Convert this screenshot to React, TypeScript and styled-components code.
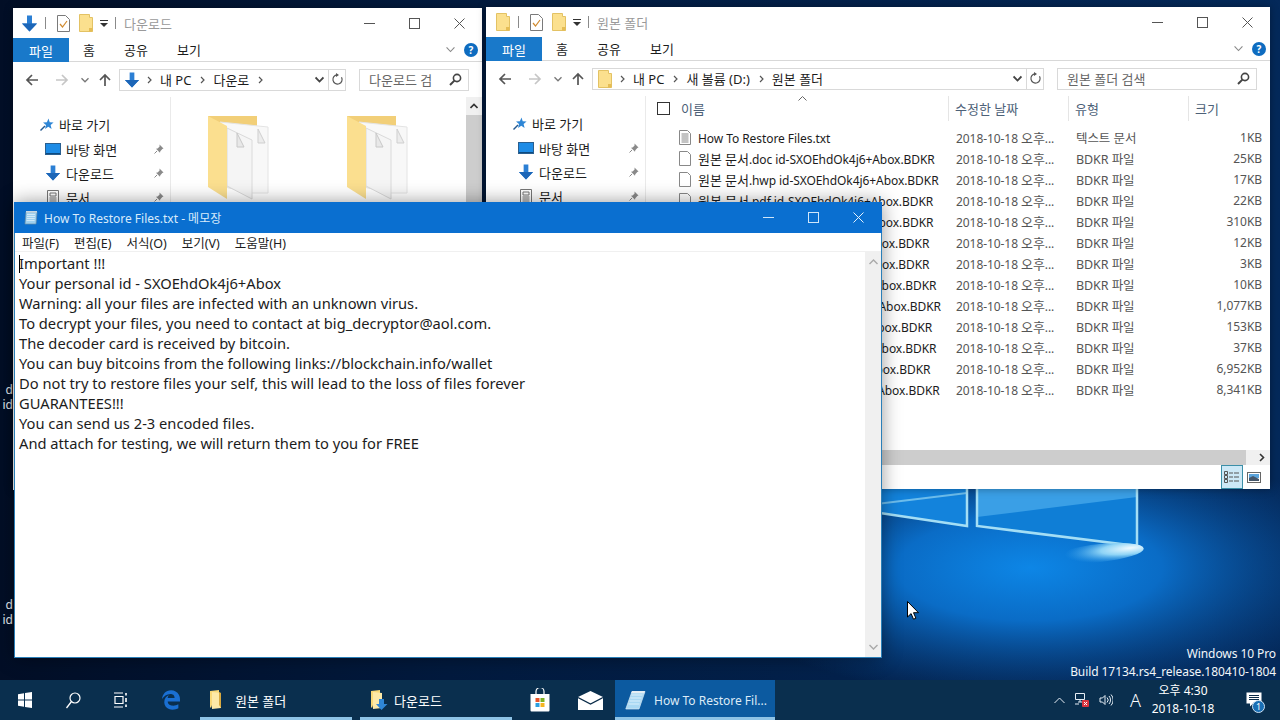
import { ReactNode } from 'react';
import styled, { createGlobalStyle } from 'styled-components';
import { FaEdgeLegacy } from 'react-icons/fa6';

const FONT = '"Noto Sans", "Noto Sans CJK KR", sans-serif';

const GlobalStyle = createGlobalStyle`
  html, body {
    margin: 0;
    padding: 0;
    width: 1280px;
    height: 720px;
    overflow: hidden;
    background: #03142e;
    font-family: ${FONT};
  }
  * { box-sizing: border-box; }
`;

const ID = ' id-SXOEhdOk4j6+Abox.BDKR';

const files = [
  { ko: '', name: 'How To Restore Files.txt', size: '1KB', kind: '텍스트 문서', lined: true },
  { ko: '원본 문서', name: '.doc' + ID, size: '25KB' },
  { ko: '원본 문서', name: '.hwp' + ID, size: '17KB' },
  { ko: '원본 문서', name: '.pdf' + ID, size: '22KB' },
  { ko: '원본 문서', name: '.ppt' + ID, size: '310KB' },
  { ko: '원본 문서', name: '.txt' + ID, size: '12KB' },
  { ko: '원본 문서', name: '.xls' + ID, size: '3KB' },
  { ko: '원본 문서', name: '.png' + ID, size: '10KB' },
  { ko: '원본 문서', name: '.docx' + ID, size: '1,077KB' },
  { ko: '원본 문서', name: '.jpg' + ID, size: '153KB' },
  { ko: '원본 문서', name: '.png' + ID, size: '37KB' },
  { ko: '원본 문서', name: '.zip' + ID, size: '6,952KB' },
  { ko: '원본 문서', name: '.pptx' + ID, size: '8,341KB' },
];

const noteLines = [
  'Important !!!',
  'Your personal id - SXOEhdOk4j6+Abox',
  'Warning: all your files are infected with an unknown virus.',
  'To decrypt your files, you need to contact at big_decryptor@aol.com.',
  'The decoder card is received by bitcoin.',
  'You can buy bitcoins from the following links://blockchain.info/wallet',
  'Do not try to restore files your self, this will lead to the loss of files forever',
  'GUARANTEES!!!',
  'You can send us 2-3 encoded files.',
  'And attach for testing, we will return them to you for FREE',
];

/* ---------- icons ---------- */

const DownArrow = ({ size = 17 }: { size?: number }) => (
  <svg width={size} height={size} viewBox="0 0 17 17">
    <path d="M6 0.5h5v8h5L8.5 16.5 1 8.5h5z" fill="#2b7fd4" />
    <path d="M8.5 16.5L1 8.5h15z" fill="#1c66b8" />
  </svg>
);

const SmallFolder = ({ size = 15 }: { size?: number }) => (
  <svg width={size - 1} height={size + 3} viewBox="0 0 14 18">
    <path d="M0.5 0.5h10v3h3v14h-13z" fill="#fbe08e" stroke="#e3c264" />
    <path d="M10 14h3.5v3.5H10z" fill="#e5bd55" />
  </svg>
);

const CheckDoc = () => (
  <svg width="13" height="17" viewBox="0 0 13 17">
    <path d="M0.5 0.5h8l4 4v12h-12z" fill="#fff" stroke="#7a7a7a" />
    <path d="M3 9l2.5 3L10 6" fill="none" stroke="#d08a2e" strokeWidth="1.2" />
  </svg>
);

const SmallCaret = () => (
  <svg width="8" height="9" viewBox="0 0 8 9">
    <path d="M0 1h8v1H0z" fill="#333" />
    <path d="M0 4h8L4 8z" fill="#333" />
  </svg>
);

const Minimize = ({ light }: { light?: boolean }) => (
  <svg width="11" height="11" viewBox="0 0 11 11">
    <path d="M0 5.5h11" stroke={light ? '#cfe6fa' : '#555'} />
  </svg>
);
const Maximize = ({ light }: { light?: boolean }) => (
  <svg width="11" height="11" viewBox="0 0 11 11">
    <rect x="0.5" y="0.5" width="10" height="10" fill="none" stroke={light ? '#cfe6fa' : '#555'} />
  </svg>
);
const CloseIcon = ({ light }: { light?: boolean }) => (
  <svg width="11" height="11" viewBox="0 0 11 11">
    <path d="M0.5 0.5l10 10M10.5 0.5l-10 10" stroke={light ? '#e4f1fc' : '#555'} />
  </svg>
);

const NavArrow = ({ dir, color }: { dir: 'left' | 'right' | 'up'; color: string }) => {
  const d = {
    left: 'M13 7H2M7 2L2 7l5 5',
    right: 'M1 7h11M7 2l5 5-5 5',
    up: 'M7 13V2M2 7l5-5 5 5',
  }[dir];
  return (
    <svg width="14" height="14" viewBox="0 0 14 14">
      <path d={d} fill="none" stroke={color} strokeWidth="1.7" />
    </svg>
  );
};

const Chevron = ({ width = 8, color = '#666', sw = 1.3 }: { width?: number; color?: string; sw?: number }) => (
  <svg width={width} height={width} viewBox="0 0 8 8">
    <path d="M0.5 2.2L4 5.8l3.5-3.6" fill="none" stroke={color} strokeWidth={sw} />
  </svg>
);

const CrumbArrow = () => (
  <svg width="5" height="8" viewBox="0 0 5 8">
    <path d="M1 1l3 3-3 3" fill="none" stroke="#555" strokeWidth="1.2" />
  </svg>
);

const Refresh = () => (
  <svg width="13" height="13" viewBox="0 0 13 13">
    <path d="M10.5 4.2A4.6 4.6 0 1 1 6.2 1.9" fill="none" stroke="#555" strokeWidth="1.2" />
    <path d="M5 0v4l3-2z" fill="#555" />
  </svg>
);

const SearchGlass = () => (
  <svg width="13" height="13" viewBox="0 0 13 13">
    <circle cx="8" cy="5" r="3.6" fill="none" stroke="#444" strokeWidth="1.6" />
    <path d="M5.4 7.6L1 12" stroke="#444" strokeWidth="2" />
  </svg>
);

const QuickStar = () => (
  <svg width="14" height="13" viewBox="0 0 14 13">
    <path d="M8.5 0.5l1.2 3.8 3.9 0.2-3 2.5 1 3.9-3.3-2.2-3.3 2.2 1-3.9-3-2.5 3.9-0.2z" fill="#2e86d6" />
    <path d="M0.5 12.5L5 8" stroke="#23598f" strokeWidth="1.4" />
  </svg>
);

const DesktopIcon = () => (
  <svg width="16" height="12" viewBox="0 0 16 12">
    <rect x="0.5" y="0.5" width="15" height="11" fill="#1e8ce6" stroke="#2a5f8f" />
    <path d="M1 10h14v1H1z" fill="#0c4a80" />
  </svg>
);

const DocsIcon = () => (
  <svg width="12" height="14" viewBox="0 0 12 14">
    <path d="M0.5 0.5h11v13h-11z" fill="#fff" stroke="#777" />
    <path d="M3 3h6v3H3zM2.5 8h7M2.5 10h7M2.5 12h7" fill="none" stroke="#777" />
  </svg>
);

const Pin = () => (
  <svg width="10" height="10" viewBox="0 0 10 10">
    <path d="M5.5 0.5l4 4-1.2 0.5-2 2.2-0.3 1.6-4-4 1.6-0.3 2-2z" fill="#8a8a8a" />
    <path d="M3 7L0.5 9.5" stroke="#8a8a8a" />
  </svg>
);

const LargeFolder = () => (
  <svg width="70" height="90" viewBox="0 0 70 90">
    <path d="M0 0h49v11H0z" fill="#f2cf78" />
    <path d="M12 6l48 5v66H44L12 70z" fill="#f8f8f8" stroke="#e4e4e4" />
    <path d="M50 13v14h7z" fill="#ececec" stroke="#cfcfcf" />
    <path d="M19 12l25 12v59L19 70z" fill="#f5f5f5" stroke="#dadada" />
    <path d="M29 17v14h7z" fill="#e8e8e8" stroke="#c8c8c8" />
    <path d="M0 0l19 10v73L0 71z" fill="#fbdf8f" />
  </svg>
);

const FileIcon = ({ lined }: { lined?: boolean }) => (
  <svg width="12" height="15" viewBox="0 0 12 15">
    <path d="M0.5 0.5h8l3 3v11h-11z" fill="#fff" stroke="#888" />
    {lined && <path d="M2.5 4h7M2.5 6h7M2.5 8h7M2.5 10h7M2.5 12h7" stroke="#888" />}
  </svg>
);

const DetailsView = () => (
  <svg width="16" height="12" viewBox="0 0 16 12">
    <path d="M0.5 0.5h3v3h-3zM0.5 4.5h3v3h-3zM0.5 8.5h3v3h-3z" fill="none" stroke="#555" />
    <path d="M5 2h4M10 2h5M5 6h4M10 6h5M5 10h4M10 10h5" stroke="#555" />
  </svg>
);

const PreviewView = () => (
  <svg width="14" height="11" viewBox="0 0 14 11">
    <rect x="0.5" y="0.5" width="13" height="10" fill="#fff" stroke="#666" />
    <path d="M2 2h10v4H2z" fill="#5ba4dc" />
    <path d="M2 6l4-2 6 3v2H2z" fill="#44566a" />
  </svg>
);

const NotepadIcon = () => (
  <svg width="14" height="15" viewBox="0 0 14 15">
    <path d="M2 2h11l-1 12H1z" fill="#9fd0ee" stroke="#6b8fa8" strokeWidth="0.7" />
    <path d="M3 4.5h8M3 6.5h8M2.8 8.5h8M2.6 10.5h8" stroke="#e6f4fb" strokeWidth="0.7" />
    <path d="M2 1h11v1.6H2z" fill="#c8d8e2" />
  </svg>
);

const NotepadBigIcon = () => (
  <svg width="21" height="21" viewBox="0 0 21 21" style={{ flex: 'none' }}>
    <path d="M7 1.5h13L14 19H0.8z" fill="#a9d8f3" stroke="#dcebf5" strokeWidth="0.7" />
    <path d="M6.5 5h11M5.5 8h11M4.5 11h11M3.5 14h11" stroke="#e9f6fc" strokeWidth="0.8" />
    <path d="M7 1h13l-0.8 2.2H6.2z" fill="#e6eef4" />
  </svg>
);

const WindowsLogo = () => (
  <svg width="14" height="16" viewBox="0 0 14 16">
    <path d="M0 2.2l6-.9v6.2H0zM7 1.1L14 0v7.5H7zM0 8.5h6v6.2l-6-.9zM7 8.5h7V16l-7-1.1z" fill="#fff" />
  </svg>
);

const TaskSearch = () => (
  <svg width="15" height="17" viewBox="0 0 15 17">
    <circle cx="9" cy="6" r="5" fill="none" stroke="#fff" strokeWidth="1.2" />
    <path d="M5.5 9.5L0.5 16" stroke="#fff" strokeWidth="1.3" />
  </svg>
);

const TaskView = () => (
  <svg width="16" height="16" viewBox="0 0 16 16">
    <path d="M1 1h9M1 15h9M2 4.5h8v7H2z" fill="none" stroke="#fff" strokeWidth="1.2" />
    <path d="M13 1v2.5M13 6v4M13 12.5V15" stroke="#fff" strokeWidth="1.6" />
  </svg>
);

const TaskFolder = ({ arrow }: { arrow?: boolean }) => (
  <svg width="18" height="22" viewBox="0 0 18 22" style={{ flex: 'none' }}>
    <path d="M1 2l9-1v15H3l-1 3-1-1z" fill="#f9d979" />
    <path d="M3 3l9 1v15l-9 1z" fill="#fde9a8" />
    {arrow ? (
      <path d="M9 10h5v5h3.5L11.5 21 6 15h3z" fill="#2f86d6" />
    ) : (
      <path d="M10 16l2 3V4l-2-1z" fill="#d8a93f" />
    )}
  </svg>
);

const StoreIcon = () => (
  <svg width="20" height="24" viewBox="0 0 20 24">
    <path d="M6 6V3.5a4 4 0 0 1 8 0V6" fill="none" stroke="#fff" strokeWidth="1.2" />
    <path d="M0.5 6h19v16.5a1 1 0 0 1-1 1h-17a1 1 0 0 1-1-1z" fill="#fff" />
    <path d="M5.5 10H9.5v4H5.5z" fill="#e8542a" />
    <path d="M10.5 10h4v4h-4z" fill="#7db122" />
    <path d="M5.5 15h4v4h-4z" fill="#2a9fe0" />
    <path d="M10.5 15h4v4h-4z" fill="#f4b522" />
  </svg>
);

const MailIcon = () => (
  <svg width="25" height="19" viewBox="0 0 25 19">
    <path d="M0 6L12.5 0 25 6v13H0z" fill="#fff" />
    <path d="M0 6.5l12.5 6.5L25 6.5" fill="none" stroke="#0a2b48" strokeWidth="1.4" />
    <path d="M0 7.5L11 13 0 19z" fill="#0a2b48" opacity="0" />
    <path d="M25 7.5L10 19h15z" fill="#fff" />
  </svg>
);

const NetworkIcon = () => (
  <svg width="16" height="16" viewBox="0 0 16 16">
    <path d="M1.5 1.5h9v6h-9zM4 10h5M6 7.5V10M1 12h4" fill="none" stroke="#e6eef5" />
    <rect x="8" y="8" width="7" height="7" rx="1" fill="#d8343f" />
    <path d="M10 10l3 3M13 10l-3 3" stroke="#fff" />
  </svg>
);

const SpeakerIcon = () => (
  <svg width="14" height="14" viewBox="0 0 14 14">
    <path d="M1 5h2.5L6 2.5v9L3.5 9H1z" fill="none" stroke="#e6eef5" />
    <path d="M8 4.5a3.5 3.5 0 0 1 0 5M10 3a6 6 0 0 1 0 8M12 1.5a8 8 0 0 1 0 11" fill="none" stroke="#e6eef5" />
  </svg>
);

const NotifyIcon = () => (
  <svg width="16" height="17" viewBox="0 0 16 17">
    <path d="M0.5 0.5h15v11H7l-3 3v-3H0.5z" fill="#fff" />
    <path d="M3 3.5h10M3 5.5h10M3 7.5h10" stroke="#0a2b48" />
  </svg>
);

const Wallpaper = () => (
  <WallpaperArt viewBox="0 0 1280 720" preserveAspectRatio="none">
    <defs>
      <linearGradient id="base" x1="0" y1="0" x2="1" y2="0">
        <stop offset="0" stopColor="#020e26" />
        <stop offset="0.35" stopColor="#021a3e" />
        <stop offset="1" stopColor="#04295a" />
      </linearGradient>
      <radialGradient id="glow" gradientUnits="userSpaceOnUse" cx="1030" cy="570" r="330" gradientTransform="translate(0 340) scale(1 0.4)">
        <stop offset="0" stopColor="#0d86e6" />
        <stop offset="0.4" stopColor="#0a6cc6" />
        <stop offset="1" stopColor="#0a4f9c" stopOpacity="0" />
      </radialGradient>
      <radialGradient id="flare" cx="0.85" cy="0.4" r="0.75">
        <stop offset="0" stopColor="#f0fbff" />
        <stop offset="0.45" stopColor="#8fd4f6" />
        <stop offset="1" stopColor="#3aa2ea" stopOpacity="0" />
      </radialGradient>
    </defs>
    <rect width="1280" height="720" fill="url(#base)" />
    <rect width="1280" height="720" fill="url(#glow)" />
    <path d="M860 400L967 400V526L860 510z" fill="#1383dc" />
    <path d="M977 400H1137V546L977 526z" fill="#0f7ed6" />
    <path d="M977 480H1137V497L977 517z" fill="#3a9fe6" />
    <path d="M860 506L967 493" stroke="#6dbdec" strokeWidth="2" fill="none" />
    <path d="M860 510L967 526V480" stroke="#a4def5" strokeWidth="2.5" fill="none" />
    <path d="M977 480V526L1137 546V480" stroke="#a4def5" strokeWidth="2.5" fill="none" />
    <ellipse cx="1100" cy="553" rx="44" ry="9" fill="url(#flare)" transform="rotate(-6 1100 553)" />
  </WallpaperArt>
);

/* ---------- explorer window ---------- */

type ExplorerProps = {
  title: string;
  titleIcon: ReactNode;
  crumbs: string[];
  search: string;
  addressIcon: ReactNode;
  x: number;
  y: number;
  w: number;
  h: number;
  navWidth: number;
  children: ReactNode;
};

const Explorer = ({ title, titleIcon, crumbs, search, addressIcon, x, y, w, h, navWidth, children }: ExplorerProps) => (
  <ExplorerFrame $x={x} $y={y} $w={w} $h={h}>
    <TitleBar>
      <QuickSlot $w={17}>{titleIcon}</QuickSlot>
      <QuickSep />
      <QuickSlot $w={13}><CheckDoc /></QuickSlot>
      <QuickSlot $w={14} $gap={9}><SmallFolder /></QuickSlot>
      <QuickSlot $w={8} $gap={7}><SmallCaret /></QuickSlot>
      <QuickSep />
      <TitleText>{title}</TitleText>
      <Controls>
        <ControlButton><Minimize /></ControlButton>
        <ControlButton><Maximize /></ControlButton>
        <ControlButton><CloseIcon /></ControlButton>
      </Controls>
    </TitleBar>
    <RibbonTabs>
      <FileTab>파일</FileTab>
      <RibbonTab $w={40}>홈</RibbonTab>
      <RibbonTab $w={54}>공유</RibbonTab>
      <RibbonTab $w={52}>보기</RibbonTab>
      <RibbonRight>
        <Chevron width={9} color="#888" sw={1} />
        <HelpBadge>?</HelpBadge>
      </RibbonRight>
    </RibbonTabs>
    <AddressRow>
      <NavButton $w={30}><NavArrow dir="left" color="#555" /></NavButton>
      <NavButton $w={30}><NavArrow dir="right" color="#c6c6c6" /></NavButton>
      <NavButton $w={16}><Chevron color="#777" /></NavButton>
      <NavButton $w={24}><NavArrow dir="up" color="#555" /></NavButton>
      <AddressBox>
        <AddressIcon>{addressIcon}</AddressIcon>
        {crumbs.map((crumb) => (
          <Crumb key={crumb}>
            <CrumbArrow />
            <span>{crumb}</span>
          </Crumb>
        ))}
        <AddressEnd>
          <Chevron width={9} color="#444" sw={1.6} />
          <RefreshCell><Refresh /></RefreshCell>
        </AddressEnd>
      </AddressBox>
      <SearchBox $w={search.length > 6 ? 200 : 110}>
        <span>{search}</span>
        <SearchGlass />
      </SearchBox>
    </AddressRow>
    <ExplorerBody>
      <NavPane $w={navWidth}>
        <NavHead>
          <QuickStar />
          <span>바로 가기</span>
        </NavHead>
        <NavItem>
          <NavIcon><DesktopIcon /></NavIcon>
          <span>바탕 화면</span>
          <PinSlot><Pin /></PinSlot>
        </NavItem>
        <NavItem>
          <NavIcon><DownArrow size={16} /></NavIcon>
          <span>다운로드</span>
          <PinSlot><Pin /></PinSlot>
        </NavItem>
        <NavItem>
          <NavIcon><DocsIcon /></NavIcon>
          <span>문서</span>
          <PinSlot><Pin /></PinSlot>
        </NavItem>
      </NavPane>
      {children}
    </ExplorerBody>
  </ExplorerFrame>
);

export default function App() {
  return (
    <Screen>
      <GlobalStyle />
      <Desktop>
        <Wallpaper />
        <DesktopLabel $y={382}>d<br />id</DesktopLabel>
        <DesktopLabel $y={597}>d<br />id</DesktopLabel>
        <Watermark>
          <div>Windows 10 Pro</div>
          <div>Build 17134.rs4_release.180410-1804</div>
        </Watermark>
        <Explorer
          title="다운로드"
          titleIcon={<DownArrow />}
          addressIcon={<DownArrow size={16} />}
          crumbs={['내 PC', '다운로', '']}
          search="다운로드 검"
          x={13}
          y={8}
          w={469}
          h={482}
          navWidth={158}
        >
          <FolderGrid>
            <LargeFolder />
            <LargeFolder />
          </FolderGrid>
          <VScroll>
            <VScrollButton>
              <svg width="8" height="6" viewBox="0 0 8 6">
                <path d="M0.5 5L4 1.5 7.5 5" fill="none" stroke="#333" strokeWidth="1.6" />
              </svg>
            </VScrollButton>
            <VScrollThumb />
          </VScroll>
        </Explorer>
        <Explorer
          title="원본 폴더"
          titleIcon={<SmallFolder />}
          addressIcon={<SmallFolder />}
          crumbs={['내 PC', '새 볼륨 (D:)', '원본 폴더']}
          search="원본 폴더 검색"
          x={486}
          y={7}
          w={784}
          h={482}
          navWidth={160}
        >
          <ListPane>
            <SortCaret>
              <svg width="9" height="5" viewBox="0 0 9 5">
                <path d="M0.5 4.5L4.5 0.5l4 4" fill="none" stroke="#666" />
              </svg>
            </SortCaret>
            <ListHead>
              <NameHead>
                <CheckBox />
                <span>이름</span>
              </NameHead>
              <ColHead>수정한 날짜</ColHead>
              <ColHead>유형</ColHead>
              <ColHead>크기</ColHead>
            </ListHead>
            <ListRows>
              {files.map((file, index) => (
                <FileRow key={index}>
                  <FileName>
                    <FileIcon lined={file.lined} />
                    <span>
                      <Hangul>{file.ko}</Hangul>
                      {file.name}
                    </span>
                  </FileName>
                  <FileCell>
                    2018-10-18 <Hangul>오후</Hangul>...
                  </FileCell>
                  <KindCell>{file.kind ?? 'BDKR 파일'}</KindCell>
                  <FileSize>{file.size}</FileSize>
                </FileRow>
              ))}
            </ListRows>
            <HScroll>
              <HScrollThumb />
              <HScrollEnd>
                <svg width="6" height="9" viewBox="0 0 6 9">
                  <path d="M1 1l3.5 3.5L1 8" fill="none" stroke="#333" strokeWidth="1.6" />
                </svg>
              </HScrollEnd>
            </HScroll>
            <StatusBar>
              <ViewToggle $active><DetailsView /></ViewToggle>
              <ViewToggle><PreviewView /></ViewToggle>
            </StatusBar>
          </ListPane>
        </Explorer>
        <Notepad>
          <NoteTitle>
            <NotepadIcon />
            <NoteTitleText>How To Restore Files.txt - 메모장</NoteTitleText>
            <Controls>
              <ControlButton><Minimize light /></ControlButton>
              <ControlButton><Maximize light /></ControlButton>
              <ControlButton><CloseIcon light /></ControlButton>
            </Controls>
          </NoteTitle>
          <NoteMenu>
            {['파일(F)', '편집(E)', '서식(O)', '보기(V)', '도움말(H)'].map((item) => (
              <span key={item}>{item}</span>
            ))}
          </NoteMenu>
          <NoteBody>
            <NoteText>
              <Caret />
              {noteLines.map((line) => (
                <div key={line}>{line}</div>
              ))}
            </NoteText>
            <NoteScroll>
              <svg width="9" height="6" viewBox="0 0 9 6">
                <path d="M0.5 5L4.5 1l4 4" fill="none" stroke="#aaa" strokeWidth="1.4" />
              </svg>
              <svg width="9" height="6" viewBox="0 0 9 6">
                <path d="M0.5 1l4 4 4-4" fill="none" stroke="#aaa" strokeWidth="1.4" />
              </svg>
            </NoteScroll>
          </NoteBody>
        </Notepad>
        <Pointer viewBox="0 0 12 19" width="12" height="19">
          <path d="M0.5 0.5v15.5l3.6-3.4 2.4 5.6 2.4-1-2.4-5.5h5z" fill="#fff" stroke="#000" />
        </Pointer>
      </Desktop>
      <Taskbar>
        <TrayIconSlot $w={50}><WindowsLogo /></TrayIconSlot>
        <TrayIconSlot $w={46}><TaskSearch /></TrayIconSlot>
        <TrayIconSlot $w={50}><TaskView /></TrayIconSlot>
        <TrayIconSlot $w={50}>
          <FaEdgeLegacy size={20} color="#1a6fd2" />
        </TrayIconSlot>
        <TaskButton $ml={4} $pad={9} $gap={8}>
          <TaskFolder />
          <span>원본 폴더</span>
        </TaskButton>
        <TaskButton $ml={8} $pad={10} $gap={6}>
          <TaskFolder arrow />
          <span>다운로드</span>
        </TaskButton>
        <TrayIconSlot $w={52} $ml={2}><StoreIcon /></TrayIconSlot>
        <TrayIconSlot $w={49}><MailIcon /></TrayIconSlot>
        <ActiveTask>
          <NotepadBigIcon />
          <span>How To Restore Fil...</span>
        </ActiveTask>
        <Tray>
          <svg width="11" height="7" viewBox="0 0 11 7">
            <path d="M0.5 6L5.5 1l5 5" fill="none" stroke="#e6eef5" />
          </svg>
          <NetworkIcon />
          <SpeakerIcon />
          <ImeLetter>A</ImeLetter>
          <Clock>
            <div>오후 4:30</div>
            <div>2018-10-18</div>
          </Clock>
          <NotifyWrap>
            <NotifyIcon />
            <NotifyBadge>1</NotifyBadge>
          </NotifyWrap>
        </Tray>
      </Taskbar>
    </Screen>
  );
}

/* ---------- styles ---------- */

const Screen = styled.div`
  width: 1280px;
  height: 720px;
  display: flex;
  flex-direction: column;
  overflow: hidden;
`;

const Desktop = styled.div`
  position: relative;
  flex: 1;
  overflow: hidden;
`;

const WallpaperArt = styled.svg`
  position: absolute;
  inset: 0;
  width: 1280px;
  height: 720px;
`;

const DesktopLabel = styled.div<{ $y: number }>`
  position: absolute;
  left: 0;
  top: ${(p) => p.$y}px;
  width: 13px;
  text-align: right;
  color: #e8eef5;
  font-size: 12px;
  line-height: 15px;
`;

const Watermark = styled.div`
  position: absolute;
  right: 4px;
  top: 645px;
  text-align: right;
  color: #f2f6fa;
  font-size: 12px;
  line-height: 18px;
  letter-spacing: -0.08px;
`;

const ExplorerFrame = styled.div<{ $x: number; $y: number; $w: number; $h: number }>`
  position: absolute;
  left: ${(p) => p.$x}px;
  top: ${(p) => p.$y}px;
  width: ${(p) => p.$w}px;
  height: ${(p) => p.$h}px;
  background: #fff;
  display: flex;
  flex-direction: column;
  box-shadow: 0 0 8px rgba(0, 0, 0, 0.35);
  overflow: hidden;
  font-size: 13px;
  color: #1c1c1c;
`;

const Hangul = styled.span`
  font-size: 13px;
`;

const TitleBar = styled.div`
  height: 30px;
  display: flex;
  align-items: center;
  padding-left: 8px;
  flex: none;
`;

const QuickSlot = styled.div<{ $w: number; $gap?: number }>`
  width: ${(p) => p.$w}px;
  margin-left: ${(p) => p.$gap ?? 0}px;
  display: flex;
  justify-content: center;
  align-items: center;
`;

const QuickSep = styled.div`
  width: 1px;
  height: 12px;
  background: #8a8a8a;
  margin: 0 8px 0 7px;
  &:nth-child(2) { margin: 0 11px 0 7px; }
`;

const TitleText = styled.div`
  color: #9a9a9a;
`;

const Controls = styled.div`
  margin-left: auto;
  display: flex;
  align-self: stretch;
`;

const ControlButton = styled.div`
  width: 45px;
  display: flex;
  align-items: center;
  justify-content: center;
`;

const RibbonTabs = styled.div`
  height: 24px;
  display: flex;
  align-items: stretch;
  flex: none;
  border-bottom: 1px solid #d8d8d8;
  padding-right: 4px;
`;

const FileTab = styled.div`
  width: 56px;
  margin-bottom: -1px;
  background: #1979ca;
  color: #fff;
  display: flex;
  align-items: center;
  justify-content: center;
`;

const RibbonTab = styled.div<{ $w: number }>`
  width: ${(p) => p.$w}px;
  display: flex;
  align-items: center;
  justify-content: center;
`;

const RibbonRight = styled.div`
  margin-left: auto;
  display: flex;
  align-items: center;
  gap: 9px;
`;

const HelpBadge = styled.div`
  width: 14px;
  height: 14px;
  border-radius: 50%;
  background: #0e6cc0;
  color: #fff;
  font-size: 10px;
  font-weight: 700;
  line-height: 14px;
  text-align: center;
`;

const AddressRow = styled.div`
  height: 35px;
  flex: none;
  display: flex;
  align-items: center;
  padding: 0 13px 0 4px;
`;

const NavButton = styled.div<{ $w: number }>`
  width: ${(p) => p.$w}px;
  display: flex;
  justify-content: center;
  align-items: center;
  flex: none;
`;

const AddressBox = styled.div`
  flex: 1;
  height: 22px;
  margin-left: 2px;
  border: 1px solid #d9d9d9;
  display: flex;
  align-items: center;
  padding-left: 4px;
  min-width: 0;
`;

const AddressIcon = styled.div`
  width: 16px;
  display: flex;
  justify-content: center;
  flex: none;
  margin-right: 7px;
`;

const Crumb = styled.div`
  display: flex;
  align-items: center;
  gap: 8px;
  margin-right: 9px;
  white-space: nowrap;
`;

const AddressEnd = styled.div`
  margin-left: auto;
  display: flex;
  align-items: center;
  align-self: stretch;
  gap: 4px;
  padding-left: 4px;
`;

const RefreshCell = styled.div`
  width: 17px;
  align-self: stretch;
  border-left: 1px solid #d9d9d9;
  display: flex;
  align-items: center;
  justify-content: center;
`;

const SearchBox = styled.div<{ $w: number }>`
  width: ${(p) => p.$w}px;
  height: 22px;
  flex: none;
  margin-left: 13px;
  border: 1px solid #d9d9d9;
  display: flex;
  align-items: center;
  justify-content: space-between;
  padding: 0 6px 0 9px;
  color: #666;
`;

const ExplorerBody = styled.div`
  flex: 1;
  display: flex;
  min-height: 0;
`;

const NavPane = styled.div<{ $w: number }>`
  width: ${(p) => p.$w}px;
  flex: none;
  border-right: 1px solid #eaeaea;
  padding: 17px 0 0 27px;
  display: flex;
  flex-direction: column;
`;

const NavHead = styled.div`
  height: 23px;
  display: flex;
  align-items: center;
  gap: 5px;
  padding-bottom: 2px;
`;

const NavItem = styled.div`
  height: 24px;
  display: flex;
  align-items: center;
  padding-left: 5px;
`;

const NavIcon = styled.div`
  width: 16px;
  display: flex;
  justify-content: center;
  margin-right: 5px;
`;

const PinSlot = styled.div`
  margin-left: auto;
  margin-right: 6px;
  display: flex;
`;

const FolderGrid = styled.div`
  flex: 1;
  display: flex;
  gap: 69px;
  padding: 19px 0 0 37px;
  align-items: flex-start;
`;

const VScroll = styled.div`
  width: 16px;
  flex: none;
  background: #f0f0f0;
  display: flex;
  flex-direction: column;
`;

const VScrollButton = styled.div`
  height: 18px;
  display: flex;
  align-items: center;
  justify-content: center;
`;

const VScrollThumb = styled.div`
  height: 200px;
  background: #cdcdcd;
`;

const ListPane = styled.div`
  position: relative;
  flex: 1;
  display: flex;
  flex-direction: column;
  min-width: 0;
`;

const SortCaret = styled.div`
  position: absolute;
  left: 152px;
  top: 0;
  line-height: 0;
`;

const listColumns = '302px 120px 120px 74px';

const ListHead = styled.div`
  display: grid;
  grid-template-columns: ${listColumns};
  height: 25px;
  flex: none;
  color: #4d6178;
`;

const NameHead = styled.div`
  display: flex;
  align-items: center;
  gap: 11px;
  padding-left: 11px;
`;

const CheckBox = styled.div`
  width: 13px;
  height: 13px;
  border: 1px solid #333;
`;

const ColHead = styled.div`
  border-left: 1px solid #e5e5e5;
  padding-left: 6px;
  display: flex;
  align-items: center;
`;

const ListRows = styled.div`
  flex: 1;
  padding-top: 6px;
  font-size: 12px;
  letter-spacing: -0.07px;
`;

const FileRow = styled.div`
  display: grid;
  grid-template-columns: ${listColumns};
  height: 21px;
  align-items: center;
`;

const FileName = styled.div`
  display: flex;
  align-items: center;
  gap: 7px;
  padding-left: 33px;
  white-space: nowrap;
  color: #1c1c1c;
`;

const FileCell = styled.div`
  padding-left: 8px;
  color: #555;
  white-space: nowrap;
`;

const KindCell = styled(FileCell)`
  font-size: 12.5px;
`;

const FileSize = styled(FileCell)`
  text-align: right;
`;

const HScroll = styled.div`
  height: 15px;
  flex: none;
  display: flex;
  background: #f0f0f0;
`;

const HScrollThumb = styled.div`
  flex: 1;
  background: #cdcdcd;
`;

const HScrollEnd = styled.div`
  width: 24px;
  display: flex;
  align-items: center;
  justify-content: flex-end;
  padding-right: 5px;
`;

const StatusBar = styled.div`
  height: 24px;
  flex: none;
  display: flex;
  justify-content: flex-end;
  padding-right: 5px;
`;

const ViewToggle = styled.div<{ $active?: boolean }>`
  width: 22px;
  display: flex;
  align-items: center;
  justify-content: center;
  background: ${(p) => (p.$active ? '#cce8f6' : 'transparent')};
  border: 1px solid ${(p) => (p.$active ? '#3b8fa8' : 'transparent')};
`;

const Notepad = styled.div`
  position: absolute;
  left: 14px;
  top: 202px;
  width: 868px;
  height: 456px;
  background: #fff;
  border: 1px solid #2a7fb8;
  border-top: none;
  display: flex;
  flex-direction: column;
  box-shadow: 0 0 18px rgba(0, 0, 0, 0.4);
`;

const NoteTitle = styled.div`
  height: 31px;
  flex: none;
  background: #0a6fd0;
  margin: 0 -1px 0 -1px;
  display: flex;
  align-items: center;
  padding-left: 10px;
  & > div:last-child { margin-right: 1px; }
`;

const NoteTitleText = styled.div`
  margin-left: 6px;
  color: #d8ebfb;
  font-size: 12px;
`;

const NoteMenu = styled.div`
  height: 19px;
  flex: none;
  display: flex;
  align-items: center;
  gap: 15px;
  padding-left: 7px;
  font-size: 12.5px;
  color: #1c1c1c;
  border-bottom: 1px solid #f0f0f0;
`;

const NoteBody = styled.div`
  flex: 1;
  display: flex;
  min-height: 0;
`;

const NoteText = styled.div`
  position: relative;
  flex: 1;
  padding: 1px 0 0 4px;
  font-size: 14.7px;
  line-height: 20px;
  color: #1c1c1c;
  white-space: pre;
`;

const Caret = styled.div`
  position: absolute;
  left: 4px;
  top: 3px;
  width: 1px;
  height: 18px;
  background: #000;
`;

const NoteScroll = styled.div`
  width: 16px;
  flex: none;
  background: #f0f0f0;
  display: flex;
  flex-direction: column;
  justify-content: space-between;
  align-items: center;
  padding: 7px 0;
`;

const Pointer = styled.svg`
  position: absolute;
  left: 907px;
  top: 601px;
`;

const Taskbar = styled.div`
  height: 40px;
  flex: none;
  display: flex;
  align-items: stretch;
  background: #0a2f4e;
  color: #fff;
  font-size: 13px;
  position: relative;
`;

const TrayIconSlot = styled.div<{ $w: number; $ml?: number }>`
  width: ${(p) => p.$w}px;
  margin-left: ${(p) => p.$ml ?? 0}px;
  display: flex;
  align-items: center;
  justify-content: center;
  flex: none;
`;

const TaskButton = styled.div<{ $ml: number; $pad: number; $gap: number }>`
  width: 152px;
  margin-left: ${(p) => p.$ml}px;
  flex: none;
  display: flex;
  align-items: center;
  gap: ${(p) => p.$gap}px;
  padding-left: ${(p) => p.$pad}px;
  border-bottom: 3px solid #8ec3e6;
  padding-top: 3px;
`;

const ActiveTask = styled.div`
  width: 160px;
  flex: none;
  display: flex;
  align-items: center;
  gap: 8px;
  padding: 3px 0 0 10px;
  background: #0c5aa0;
  border-bottom: 3px solid #8ec3e6;
  color: #dcebf7;
  font-size: 12px;
  white-space: nowrap;
`;

const Tray = styled.div`
  margin-left: auto;
  display: flex;
  align-items: center;
  gap: 9px;
  padding-right: 18px;
`;

const ImeLetter = styled.div`
  font-size: 18px;
  font-weight: 300;
  margin-left: 8px;
  margin-right: -2px;
`;

const Clock = styled.div`
  width: 70px;
  text-align: center;
  line-height: 18px;
  font-size: 12px;
`;

const NotifyWrap = styled.div`
  position: relative;
  margin-left: 19px;
  display: flex;
`;

const NotifyBadge = styled.div`
  position: absolute;
  right: -3px;
  bottom: -4px;
  width: 13px;
  height: 13px;
  border-radius: 50%;
  background: #1a6fb5;
  border: 1px solid #cfe3f4;
  font-size: 9px;
  line-height: 11px;
  text-align: center;
`;
